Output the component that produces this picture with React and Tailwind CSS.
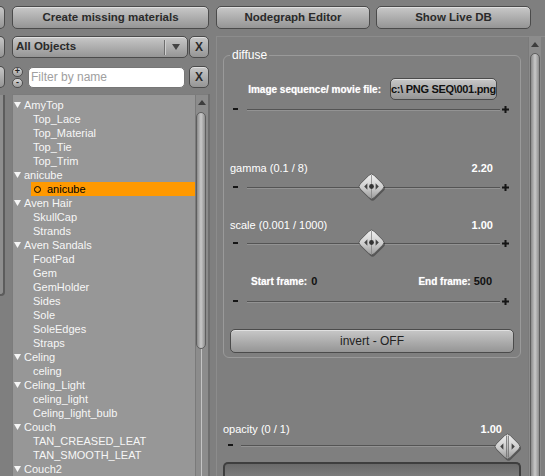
import React from 'react';

const btn =
  'flex items-center justify-center rounded-[5px] border border-[#4b4b4b] bg-linear-to-b from-[#c8c8c8] to-[#959595] shadow-[inset_0_1px_0_rgba(255,255,255,0.45)] text-[11.5px] font-bold text-[#2a2a2a]';

const tree = [
  ['AmyTop', ['Top_Lace', 'Top_Material', 'Top_Tie', 'Top_Trim']],
  ['anicube', ['*anicube']],
  ['Aven Hair', ['SkullCap', 'Strands']],
  ['Aven Sandals', ['FootPad', 'Gem', 'GemHolder', 'Sides', 'Sole', 'SoleEdges', 'Straps']],
  ['Celing', ['celing']],
  ['Celing_Light', ['celing_light', 'Celing_light_bulb']],
  ['Couch', ['TAN_CREASED_LEAT', 'TAN_SMOOTH_LEAT']],
  ['Couch2', []],
];

function Thumb({ id, grip }) {
  return (
    <svg width="30" height="30" viewBox="0 0 30 30">
      <defs>
        <linearGradient id={id} x1="0" y1="0" x2="1" y2="1">
          <stop offset="0" stopColor="#f4f4f4" />
          <stop offset="0.55" stopColor="#cdcdcd" />
          <stop offset="1" stopColor="#949494" />
        </linearGradient>
      </defs>
      <rect x="5.75" y="6.5" width="19.5" height="19.5" rx="3.5" transform="rotate(45 15.5 16.25)" fill="rgba(0,0,0,0.32)" />
      <rect x="4.75" y="4.75" width="19.5" height="19.5" rx="3.5" transform="rotate(45 14.5 14.5)" fill={`url(#${id})`} stroke="#5a5a5a" strokeWidth="0.9" />
      {grip ? (
        <>
          <line x1="13.6" y1="3.5" x2="13.6" y2="25.5" stroke="#707070" strokeWidth="0.9" />
          <line x1="15.4" y1="3.5" x2="15.4" y2="25.5" stroke="#707070" strokeWidth="0.9" />
        </>
      ) : (
        <>
          <line x1="14.5" y1="3" x2="14.5" y2="26" stroke="#858585" strokeWidth="0.8" />
          <circle cx="14.5" cy="14.5" r="2.4" fill="#333" />
        </>
      )}
      <polygon points="7.2,14.5 10.4,11.3 10.4,17.7" fill="#454545" />
      <polygon points="21.8,14.5 18.6,11.3 18.6,17.7" fill="#454545" />
    </svg>
  );
}

function Minus() {
  return <span className="w-[5px] h-[2px] bg-[#151515] shrink-0" />;
}

function Plus() {
  return (
    <svg width="7" height="7" viewBox="0 0 7 7" className="shrink-0">
      <rect x="0" y="2.5" width="7" height="2" fill="#151515" />
      <rect x="2.5" y="0" width="2" height="7" fill="#151515" />
    </svg>
  );
}

function Line({ w }) {
  return <span className="h-px bg-[#545454] shadow-[0_1px_0_#939393] shrink-0" style={{ width: w }} />;
}

function Slider({ className, thumb, id }) {
  return (
    <div className={`relative h-[10px] flex items-center pl-[9px] ${className}`}>
      <Minus />
      <span className="ml-[9px]" />
      <Line w={253} />
      <span className="ml-[2px]" />
      <Plus />
      {thumb && (
        <div className="absolute left-[133px] top-[-10px]">
          <Thumb id={id} />
        </div>
      )}
    </div>
  );
}

function Scrollbar({ thumbTop, thumbHeight, tail, left }) {
  return (
    <div className="w-[13px] h-full relative flex flex-col items-center bg-[#8c8c8c] border-l border-[#7a7a7a]">
      <svg width="8" height="5" viewBox="0 0 8 5" className="mt-[5px]">
        <polygon points="4,0 8,5 0,5" fill="#3d3d3d" />
      </svg>
      <div
        className="absolute w-[10px] rounded-full border border-[#5e5e5e] bg-linear-to-r from-[#8a8a8a] via-[#c9c9c9] to-[#8f8f8f]"
        style={{ top: thumbTop, height: thumbHeight, left }}
      />
      {tail && <div className="absolute w-px bg-[#c4c4c4]" style={{ top: thumbTop + thumbHeight, bottom: 0, left: left + 5 }} />}
    </div>
  );
}

export default function App() {
  return (
    <div className="w-[545px] h-[476px] overflow-hidden bg-[#7f7f7f] flex font-['Liberation_Sans',Arial,sans-serif] select-none">
      {/* cut-off column at the left edge */}
      <div className="w-[5px] shrink-0 flex flex-col pt-[6px]">
        <div className="h-[23px] rounded-r-[5px] border border-l-0 border-[#4b4b4b] bg-linear-to-b from-[#c8c8c8] to-[#959595]" />
        <div className="mt-[7px] h-[22px] rounded-r-[5px] border border-l-0 border-[#4b4b4b] bg-linear-to-b from-[#c8c8c8] to-[#959595]" />
        <div className="mt-[8px] h-[22px] rounded-r-[5px] border border-l-0 border-[#4b4b4b] bg-linear-to-b from-[#c8c8c8] to-[#959595]" />
        <div className="mt-[7px] h-[201px] rounded-br-[4px] border-r-2 border-b-2 border-[#5c5c5c] bg-[#8e8e8e]" />
      </div>

      {/* left column */}
      <div className="ml-[7px] w-[198px] shrink-0 flex flex-col pt-[6px]">
        <button className={`${btn} h-[23px] w-[197px]`}>Create missing materials</button>

        <div className="mt-[7px] h-[22px] flex">
          <div className="w-[176px] h-full flex items-center rounded-[5px] border border-[#4b4b4b] bg-linear-to-b from-[#c8c8c8] to-[#959595] shadow-[inset_0_1px_0_rgba(255,255,255,0.45)]">
            <span className="pl-[3px] text-[11.5px] font-bold text-[#2a2a2a] flex-1">All Objects</span>
            <span className="w-px h-[15px] bg-[#6e6e6e] shadow-[1px_0_0_#cfcfcf]" />
            <svg width="8" height="6" viewBox="0 0 8 6" className="mx-[7px]">
              <polygon points="0,0 8,0 4,6" fill="#444" />
            </svg>
          </div>
          <button className={`${btn} ml-[1px] w-[20px] h-full text-[12px]`}>X</button>
        </div>

        <div className="mt-[8px] h-[22px] flex items-center">
          <div className="w-[11px] flex flex-col gap-px">
            <span className="h-[10px] rounded-full border border-[#505050] bg-linear-to-b from-[#d8d8d8] to-[#9c9c9c] flex items-center justify-center text-[9px] leading-none font-bold text-[#222]">+</span>
            <span className="h-[10px] rounded-full border border-[#505050] bg-linear-to-b from-[#d8d8d8] to-[#9c9c9c] flex items-center justify-center text-[9px] leading-none font-bold text-[#222]">-</span>
          </div>
          <div className="ml-[5px] w-[157px] h-[21px] rounded-[5px] bg-white border border-[#777] flex items-center pl-[2px] text-[12px] text-[#a0a0a0]">
            Filter by name
          </div>
          <button className={`${btn} ml-[4px] w-[20px] h-full text-[12px]`}>X</button>
        </div>

        <div className="mt-[6px] flex-1 flex min-h-0">
          <div className="w-[196px] flex bg-[#979797] border-l border-t border-[#7c7c7c]">
            <div className="flex-1 pt-[3px] text-[11px] leading-[14px] text-[#f6f6f6] overflow-hidden">
              {tree.map(([parent, kids]) => (
                <React.Fragment key={parent}>
                  <div className="h-[14px] flex items-center pl-[1px]">
                    <svg width="7" height="6" viewBox="0 0 7 6">
                      <polygon points="0,0 7,0 3.5,6" fill="#f6f6f6" />
                    </svg>
                    <span className="ml-[3px]">{parent}</span>
                  </div>
                  {kids.map((k) =>
                    k.startsWith('*') ? (
                      <div key={k} className="h-[14px] ml-[18px] flex items-center bg-[#ff9900] text-black pl-[3px]">
                        <span className="w-[7px] h-[7px] rounded-full border border-black" />
                        <span className="ml-[6px]">{k.slice(1)}</span>
                      </div>
                    ) : (
                      <div key={k} className="h-[14px] flex items-center pl-[20px]">
                        {k}
                      </div>
                    )
                  )}
                </React.Fragment>
              ))}
            </div>
            <Scrollbar thumbTop={17} thumbHeight={237} tail left={0} />
          </div>
          <div className="w-[2px] bg-[#6f6f6f]" />
        </div>
      </div>

      {/* right column */}
      <div className="ml-[6px] flex-1 flex flex-col pt-[6px]">
        <div className="flex gap-[6px]">
          <button className={`${btn} h-[23px] w-[154px]`}>Nodegraph Editor</button>
          <button className={`${btn} h-[23px] w-[155px]`}>Show Live DB</button>
        </div>

        <div className="mt-[7px] flex-1 flex border-t border-l border-[#8c8c8c] min-h-0">
          <div className="w-[311px] flex flex-col">
            <fieldset className="mt-[11px] ml-[6px] w-[298px] rounded-[6px] border border-[#9a9a9a] pb-[4px]">
              <legend className="ml-[6px] px-[2px] text-[12px] leading-[14px] text-white">diffuse</legend>

              <div className="mt-[16px] h-[22px] flex items-center justify-end pr-[23px]">
                <span className="text-[10px] font-bold text-white mr-[9px] [text-shadow:0_0_1px_rgba(255,255,255,0.6)]">
                  Image sequence/ movie file:
                </span>
                <button className={`${btn} w-[107px] h-[22px] text-[11px] text-[#111] tracking-[-0.3px]`}>
                  c:\ PNG SEQ\001.png
                </button>
              </div>

              <Slider className="mt-[4px]" />

              <div className="mt-[48px] h-[13px] flex items-center justify-between pl-[6px] pr-[27px] text-[11px] text-white">
                <span>gamma (0.1 / 8)</span>
                <span className="font-bold">2.20</span>
              </div>
              <Slider className="mt-[7px]" thumb id="tg" />

              <div className="mt-[27px] h-[13px] flex items-center justify-between pl-[6px] pr-[27px] text-[11px] text-white">
                <span>scale (0.001 / 1000)</span>
                <span className="font-bold">1.00</span>
              </div>
              <Slider className="mt-[6px]" thumb id="ts" />

              <div className="mt-[26px] h-[14px] flex items-center justify-between">
                <div className="pl-[27px] flex items-baseline">
                  <span className="text-[10px] font-bold text-white [text-shadow:0_0_1px_rgba(255,255,255,0.6)]">Start frame:</span>
                  <span className="ml-[4px] text-[11px] font-bold text-[#111]">0</span>
                </div>
                <div className="pr-[28px] flex items-baseline">
                  <span className="text-[10px] font-bold text-white [text-shadow:0_0_1px_rgba(255,255,255,0.6)]">End frame:</span>
                  <span className="ml-[3px] text-[11px] font-bold text-[#111]">500</span>
                </div>
              </div>
              <Slider className="mt-[8px]" />

              <button className={`${btn} mt-[23px] ml-[6px] w-[284px] h-[24px] text-[12px] font-normal text-[#222]`}>
                invert - OFF
              </button>
            </fieldset>

            <div className="mt-[65px] h-[13px] flex items-center justify-between pl-[6px] pr-[26px] text-[11px] text-white">
              <span>opacity (0 / 1)</span>
              <span className="font-bold">1.00</span>
            </div>
            <div className="relative mt-[6px] h-[10px] flex items-center pl-[11px]">
              <Minus />
              <span className="ml-[8px]" />
              <Line w={259} />
              <div className="absolute left-[276px] top-[-10px]">
                <Thumb id="to" grip />
              </div>
            </div>
            <div className="mt-[14px] ml-[6px] w-[298px] h-[20px] rounded-t-[5px] border-2 border-b-0 border-[#3e3e3e] bg-linear-to-b from-[#6a6a6a] to-[#7c7c7c]" />
          </div>
          <div className="h-full">
            <Scrollbar thumbTop={16} thumbHeight={500} left={1} />
          </div>
        </div>
      </div>
    </div>
  );
}
